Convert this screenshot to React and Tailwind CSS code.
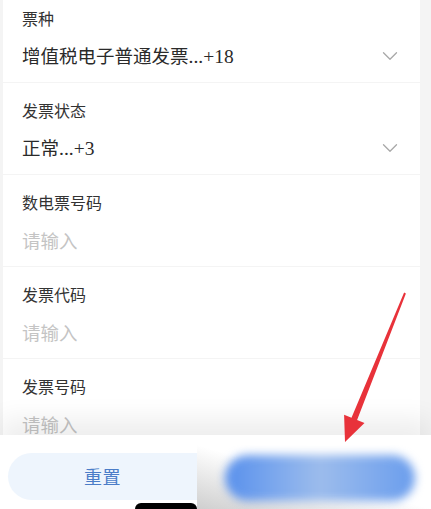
import { ChevronDown } from "lucide-react";

const fields = [
  { label: "票种", value: "增值税电子普通发票", extra: "...+18", select: true },
  { label: "发票状态", value: "正常", extra: "...+3", select: true },
  { label: "数电票号码" },
  { label: "发票代码" },
  { label: "发票号码" },
];

const Field = ({ item, first }) => (
  <div className={`${first ? "pt-2" : "pt-[17px]"} pb-[13px] pl-[19px]`}>
    <p className="h-5 text-[16px] leading-5 text-[#333]">{item.label}</p>
    <div className="mt-[15px] flex h-[26px] items-center pr-[17px] text-[18.5px] leading-[26px]">
      {item.select ? (
        <>
          <span className="flex-1 text-[#2a2a2a]">
            {item.value}
            <span className="font-['Liberation_Serif',serif] text-[19.5px]">{item.extra}</span>
          </span>
          <ChevronDown size={26} strokeWidth={1.2} className="text-[#a8a8a8]" />
        </>
      ) : (
        <span className="text-[#c4c4c4]">请输入</span>
      )}
    </div>
  </div>
);

export default function App() {
  return (
    <div className="relative h-[509px] w-[431px] overflow-hidden bg-[#f4f4f4] font-['Noto_Sans_CJK_SC','Noto_Sans',sans-serif]">
      <div className="ml-[3px] h-[435px] w-[417px] overflow-hidden bg-white">
        {fields.map((item, i) => (
          <div key={item.label} className={i < fields.length - 1 ? "border-b border-[#f4f4f4]" : ""}>
            <Field item={item} first={i === 0} />
          </div>
        ))}
      </div>

      <div className="relative flex h-[74px] items-start bg-white shadow-[0_-16px_26px_rgba(0,0,0,0.07)]">
        <button className="ml-2 mt-[18px] h-[47px] w-[189px] rounded-l-full bg-[#eef5fd] text-[18px] tracking-wide text-[#4b7dc8]">
          重置
        </button>
        <div className="relative mt-[10px] h-[64px] w-[234px] overflow-hidden bg-linear-to-tr from-[#cfcfcf] via-white to-white">
          <div className="ml-[28px] mt-[10px] h-[46px] w-[190px] rounded-full bg-linear-to-r from-[#5890ec] via-[#9cbcec] to-[#6a9ded] blur-[5px]" />
        </div>
        <div className="absolute bottom-0 left-[135px] h-[6px] w-[62px] rounded-t-full bg-black" />
      </div>

      <svg className="pointer-events-none absolute inset-0" width="431" height="509" viewBox="0 0 431 509">
        <polygon
          points="404.1,292.6 405.9,293.4 357.1,419.9 364.5,422.9 345,442 344.1,414.7 351.5,417.7"
          fill="#e8323a"
        />
      </svg>
    </div>
  );
}
